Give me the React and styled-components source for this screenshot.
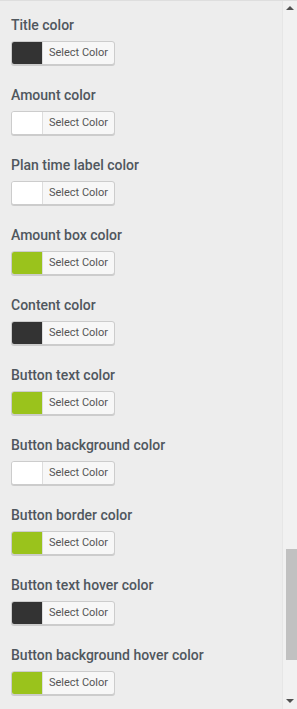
import React from 'react';
import styled, { createGlobalStyle } from 'styled-components';

const GlobalStyle = createGlobalStyle`
  html, body {
    margin: 0;
    padding: 0;
    background: #ededed;
  }
`

const Frame = styled.div`
  display: flex;
  width: 297px;
  height: 709px;
  overflow: hidden;
  box-sizing: border-box;
  border-top: 1px solid #dedede;
  background: #ededed;
  font-family: Roboto, "Liberation Sans", sans-serif;
`

const Panel = styled.div`
  flex: 1;
  padding: 14px 0 0 11px;
`

const Field = styled.div`
  margin-bottom: 20px;
`

const Label = styled.div`
  font-size: 14px;
  font-weight: 500;
  line-height: 20px;
  color: #50575e;
  margin-bottom: 6px;
`

const Picker = styled.button`
  display: flex;
  align-items: stretch;
  height: 24px;
  width: 104px;
  padding: 0;
  box-sizing: border-box;
  border: 1px solid #cccccc;
  border-radius: 3px;
  background: #f7f7f7;
  overflow: hidden;
  box-shadow: 0 1px 0 #cccccc;
  cursor: pointer;
`

const Swatch = styled.span`
  width: 30px;
  background: ${p => p.color};
  border-right: 1px solid #dddddd;
`

const PickerText = styled.span`
  flex: 1;
  font-family: Roboto, "Liberation Sans", sans-serif;
  font-size: 11px;
  line-height: 22px;
  color: #555555;
  text-align: center;
`

const Scrollbar = styled.div`
  width: 14px;
  display: flex;
  flex-direction: column;
  align-items: center;
  background: #f1f1f1;
  border-left: 1px solid #e6e6e6;
`

const Arrow = styled.div`
  width: 0;
  height: 0;
  border-left: 4px solid transparent;
  border-right: 4px solid transparent;
  ${p => p.down
    ? 'border-top: 4px solid #505050; margin-top: auto; margin-bottom: 6px;'
    : 'border-bottom: 4px solid #505050; margin-top: 5px;'}
`

const Thumb = styled.div`
  width: 11px;
  height: 111px;
  margin-top: 539px;
  margin-left: 2px;
  background: #c1c1c1;
`

const fields = [
  ['Title color', '#333333'],
  ['Amount color', '#ffffff'],
  ['Plan time label color', '#ffffff'],
  ['Amount box color', '#9ac31c'],
  ['Content color', '#333333'],
  ['Button text color', '#9ac31c'],
  ['Button background color', '#ffffff'],
  ['Button border color', '#9ac31c'],
  ['Button text hover color', '#333333'],
  ['Button background hover color', '#9ac31c'],
];

export default () => {
  return (
    <>
      <GlobalStyle />
      <Frame>
        <Panel>
          {fields.map(([label, color]) => (
            <Field key={label}>
              <Label>{label}</Label>
              <Picker>
                <Swatch color={color} />
                <PickerText>Select Color</PickerText>
              </Picker>
            </Field>
          ))}
        </Panel>
        <Scrollbar>
          <Arrow />
          <Thumb />
          <Arrow down />
        </Scrollbar>
      </Frame>
    </>
  );
}
